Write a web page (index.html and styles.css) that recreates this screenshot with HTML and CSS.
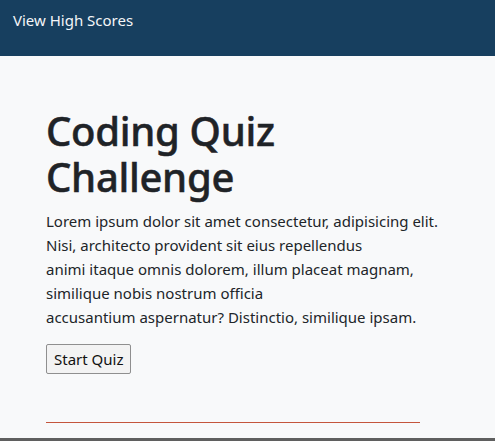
FILE: index.html
```html
<!DOCTYPE html>
<html lang="en">
<head>
<meta charset="utf-8">
<title>Coding Quiz</title>
<link rel="stylesheet" href="styles.css">
</head>
<body>
<header class="topbar">
  <a class="scores-link" href="#">View High Scores</a>
</header>
<main class="content">
  <section class="intro">
    <h1 class="title"><span class="title-line">Coding Quiz</span><span class="title-line">Challenge</span></h1>
    <p class="lead">Lorem ipsum dolor sit amet consectetur, adipisicing elit.<br>Nisi, architecto provident sit eius repellendus<br>animi itaque omnis dolorem, illum placeat magnam,<br>similique nobis nostrum officia<br>accusantium aspernatur? Distinctio, similique ipsam.</p>
    <button class="start-btn" type="button">Start Quiz</button>
    <div class="divider"></div>
  </section>
</main>
<div class="bottom-bar"></div>
</body>
</html>
```
FILE: styles.css
```css
* { box-sizing: border-box; }
html, body { margin: 0; padding: 0; height: 100%; }
body {
  font-family: "Noto Sans", "Open Sans", sans-serif;
  background: #f8f9fa;
  color: #212529;
  display: flex;
  flex-direction: column;
  overflow: hidden;
}
.topbar {
  background: #173f5f;
  height: 56px;
  padding: 8px 13px 0;
  flex: none;
}
.scores-link {
  color: #f4f6f8;
  text-decoration: none;
  font-size: 15px;
  line-height: 24px;
}
.content {
  flex: 1;
  padding: 52px 0 0 46px;
}
.intro { width: 420px; }
.title {
  margin: 0 0 9px;
  font-size: 40px;
  line-height: 46px;
  font-weight: 500;
  letter-spacing: -0.3px;
  color: #1f2327;
  -webkit-text-stroke: 0.5px #1f2327;
}
.title-line { display: block; }
.lead {
  margin: 0 0 15px;
  font-size: 15px;
  line-height: 24px;
  white-space: nowrap;
}
.start-btn {
  display: block;
  font-family: inherit;
  font-size: 15px;
  color: #111;
  background: #f3f3f3;
  border: 1px solid #8f8f8f;
  border-radius: 2px;
  padding: 0 7px;
  height: 30px;
}
.divider {
  margin-top: 48px;
  width: 374px;
  height: 1px;
  background: #c4553c;
}
.bottom-bar {
  height: 3px;
  background: #5f5f5f;
  flex: none;
}
```
